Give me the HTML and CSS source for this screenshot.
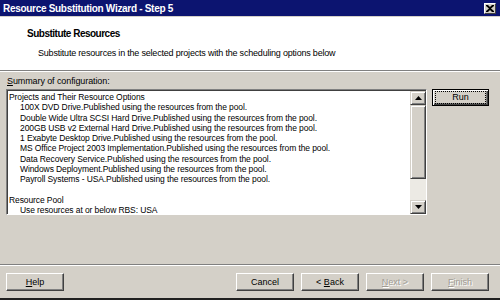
FILE: index.html
```html
<!DOCTYPE html>
<html lang="en">
<head>
    <meta charset="UTF-8">
    <title>Resource Substitution Wizard - Step 5</title>
    <link rel="stylesheet" href="styles.css">
</head>
<body>
    <div class="window">
        <div class="titleBar">
            <span class="titleText">Resource Substitution Wizard - Step 5</span>
            <span class="closeBtn">
                <svg width="8" height="7" viewBox="0 0 8 7"><path d="M0 0h2l2 2 2-2h2v1L5 3.5 8 6v1H6L4 5 2 7H0V6l3-2.5L0 1z" fill="#000"/></svg>
            </span>
        </div>
        <div class="header">
            <div class="headTitle">Substitute Resources</div>
            <div class="headText">Substitute resources in the selected projects with the scheduling options below</div>
        </div>
        <div class="body">
            <div class="label"><u>S</u>ummary of configuration:</div>
            <div class="row">
                <div class="listBox">
                    <div class="listText">
                        <div>Projects and Their Resource Options</div>
                        <div class="ind">100X DVD Drive.Published using the resources from the pool.</div>
                        <div class="ind">Double Wide Ultra SCSI Hard Drive.Published using the resources from the pool.</div>
                        <div class="ind">200GB USB v2 External Hard Drive.Published using the resources from the pool.</div>
                        <div class="ind">1 Exabyte Desktop Drive.Published using the resources from the pool.</div>
                        <div class="ind">MS Office Project 2003 Implementation.Published using the resources from the pool.</div>
                        <div class="ind">Data Recovery Service.Published using the resources from the pool.</div>
                        <div class="ind">Windows Deployment.Published using the resources from the pool.</div>
                        <div class="ind">Payroll Systems - USA.Published using the resources from the pool.</div>
                        <div>&nbsp;</div>
                        <div>Resource Pool</div>
                        <div class="ind">Use resources at or below RBS: USA</div>
                    </div>
                    <div class="scrollBar">
                        <div class="arrowBtn"><svg width="7" height="4" viewBox="0 0 7 4"><path d="M3.5 0L7 4H0z" fill="#000"/></svg></div>
                        <div class="thumb"></div>
                        <div class="track"></div>
                        <div class="arrowBtn"><svg width="7" height="4" viewBox="0 0 7 4"><path d="M0 0h7L3.5 4z" fill="#000"/></svg></div>
                    </div>
                </div>
                <div class="btn runBtn"><span class="focus">Run</span></div>
            </div>
        </div>
        <div class="footer">
            <div class="btn"><span><u>H</u>elp</span></div>
            <div class="spacer"></div>
            <div class="btn"><span>Cancel</span></div>
            <div class="btn"><span>&lt; <u>B</u>ack</span></div>
            <div class="btn disabled"><span><u>N</u>ext &gt;</span></div>
            <div class="btn disabled"><span><u>F</u>inish</span></div>
        </div>
    </div>
</body>
</html>
```

FILE: styles.css
```css
body {
    margin: 0;
    font-family: "Liberation Sans", Arial, sans-serif;
    font-size: 8.5px;
    letter-spacing: -0.1px;
    background-color: #d4d0c8;
}

.window {
    width: 500px;
    height: 300px;
    display: flex;
    flex-direction: column;
    background-color: #d4d0c8;
    border-bottom: 2px solid #202020;
    box-sizing: border-box;
}

.titleBar {
    height: 17px;
    background-color: #0c1470;
    display: flex;
    align-items: center;
    justify-content: space-between;
    padding: 0 3px 0 3px;
    border-bottom: 1px solid #d4d0c8;
    box-sizing: border-box;
}

.titleText {
    color: #fff;
    font-weight: bold;
    font-size: 10px;
    letter-spacing: -0.3px;
}

.closeBtn {
    width: 12px;
    height: 11px;
    background-color: #d4d0c8;
    border: 1px solid;
    border-color: #fff #404040 #404040 #fff;
    display: flex;
    align-items: center;
    justify-content: center;
    box-sizing: border-box;
    margin-right: 1px;
}

.header {
    background-color: #fff;
    height: 54px;
    border-bottom: 1px solid #808080;
    box-shadow: 0 1px 0 #fff;
    box-sizing: border-box;
    padding: 11px 0 0 27px;
}

.headTitle {
    font-weight: bold;
    font-size: 10px;
    letter-spacing: -0.5px;
}

.headText {
    margin-top: 9px;
    margin-left: 11px;
    font-size: 9px;
    letter-spacing: -0.2px;
}

.body {
    padding: 5px 11px 0 6px;
    height: 194px;
    box-sizing: border-box;
    border-bottom: 1px solid #808080;
    box-shadow: 0 1px 0 #fff;
}

.label {
    margin-bottom: 3px;
    padding-left: 1px;
    font-size: 9px;
}

.row {
    display: flex;
    gap: 5px;
}

.listBox {
    width: 423px;
    height: 126px;
    border: 1px solid;
    border-color: #808080 #fff #fff #808080;
    box-sizing: border-box;
    display: flex;
}

.listText {
    flex: 1;
    background-color: #fff;
    border-top: 1px solid #404040;
    border-left: 1px solid #404040;
    padding: 1px 0 0 1px;
    line-height: 10.3px;
    white-space: nowrap;
    overflow: hidden;
}

.ind {
    padding-left: 11px;
}

.scrollBar {
    width: 16px;
    display: flex;
    flex-direction: column;
    border-top: 1px solid #404040;
    background-color: #eceae4;
}

.arrowBtn, .thumb {
    background-color: #d4d0c8;
    border: 1px solid;
    border-color: #d4d0c8 #404040 #404040 #d4d0c8;
    box-shadow: inset 1px 1px 0 #fff, inset -1px -1px 0 #808080;
    box-sizing: border-box;
}

.arrowBtn {
    height: 14px;
    display: flex;
    align-items: center;
    justify-content: center;
}

.thumb {
    height: 74px;
}

.track {
    flex: 1;
}

.btn {
    width: 58px;
    height: 18px;
    box-sizing: border-box;
    border: 1px solid;
    border-color: #fff #404040 #404040 #fff;
    box-shadow: inset -1px -1px 0 #808080;
    display: flex;
    align-items: center;
    justify-content: center;
    font-size: 9px;
    letter-spacing: 0;
}

.runBtn {
    width: 57px;
    height: 17px;
    border: 1px solid #000;
    box-shadow: inset 1px 1px 0 #fff, inset -1px -1px 0 #404040, inset -2px -2px 0 #808080;
}

.focus {
    outline: 1px dotted #000;
    outline-offset: 0;
    width: 49px;
    height: 11px;
    text-align: center;
    line-height: 11px;
}

.disabled {
    color: #a09c94;
    text-shadow: 1px 1px 0 #fff;
}

.footer {
    display: flex;
    gap: 7px;
    padding: 8px 11px 0 6px;
}

.spacer {
    flex: 1;
}
```
